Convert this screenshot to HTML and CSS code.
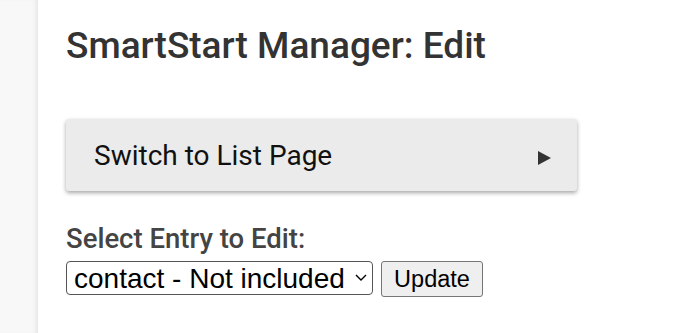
FILE: index.html
```html
<!DOCTYPE html>
<html lang="en">
<head>
    <meta charset="UTF-8">
    <meta name="viewport" content="width=device-width, initial-scale=1.0">
    <title>SmartStart Manager: Edit</title>
    <link rel="stylesheet" href="styles.css">
</head>
<body>
    <div class="layout">
        <div class="sidebar"></div>
        <div class="main">
            <h1 class="page-title">SmartStart Manager: Edit</h1>

            <a href="#" class="nav-card">
                <span>Switch to List Page</span>
                <svg class="arrow" width="13" height="14" viewBox="0 0 13 14">
                    <polygon points="0,0 13,7 0,14" fill="#333333"/>
                </svg>
            </a>

            <form class="entry-form">
                <label class="entry-label" for="entry">Select Entry to Edit:</label>
                <div class="entry-row">
                    <span class="select-wrap">
                        <select id="entry" class="entry-select">
                            <option>contact - Not included</option>
                        </select>
                        <svg class="chevron" width="12" height="7" viewBox="0 0 12 7">
                            <path d="M1 1 L6 6 L11 1" fill="none" stroke="#000" stroke-width="1.4"/>
                        </svg>
                    </span>
                    <button type="button" class="update-button">Update</button>
                </div>
            </form>
        </div>
    </div>
</body>
</html>
```

FILE: styles.css
```css
body {
    margin: 0;
    padding: 0;
    font-family: Roboto, "Liberation Sans", sans-serif;
    background-color: #ffffff;
}

.layout {
    display: flex;
    min-height: 333px;
}

.sidebar {
    width: 38px;
    flex-shrink: 0;
    background-color: #f8f8f8;
    box-shadow: inset -4px 0 4px -2px rgba(0, 0, 0, 0.08);
}

.main {
    flex: 1;
    padding: 0 28px 0 28px;
}

.page-title {
    margin: 22px 0 0 0;
    font-size: 37px;
    font-weight: 500;
    color: #333333;
    line-height: 48px;
}

.nav-card {
    display: flex;
    justify-content: space-between;
    align-items: center;
    width: 511px;
    height: 72px;
    box-sizing: border-box;
    margin-top: 49px;
    padding: 0 26px 0 28px;
    background-color: #ebebeb;
    border-radius: 3px;
    box-shadow: 0 2px 4px rgba(0, 0, 0, 0.35);
    color: #111111;
    text-decoration: none;
    font-size: 28px;
}

.arrow {
    margin-top: 6px;
}

.entry-form {
    margin-top: 30px;
}

.entry-label {
    display: block;
    font-size: 27.5px;
    font-weight: 500;
    color: #444444;
    line-height: 36px;
}

.entry-row {
    display: flex;
    align-items: flex-start;
    gap: 8px;
    margin-top: 4px;
}

.select-wrap {
    position: relative;
    display: block;
}

.entry-select {
    display: block;
    width: 307px;
    height: 34px;
    font-family: "Liberation Sans", Arial, sans-serif;
    font-size: 28px;
    color: #000000;
    background-color: #ffffff;
    border: 1px solid #555555;
    border-radius: 4px;
    padding: 0 24px 0 7px;
    appearance: none;
    -webkit-appearance: none;
}

.chevron {
    position: absolute;
    right: 6px;
    top: 13px;
    pointer-events: none;
}

.update-button {
    width: 102px;
    height: 36px;
    font-family: "Liberation Sans", Arial, sans-serif;
    font-size: 23.5px;
    color: #000000;
    background-color: #efefef;
    border: 1px solid #767676;
    border-radius: 3px;
}
```
